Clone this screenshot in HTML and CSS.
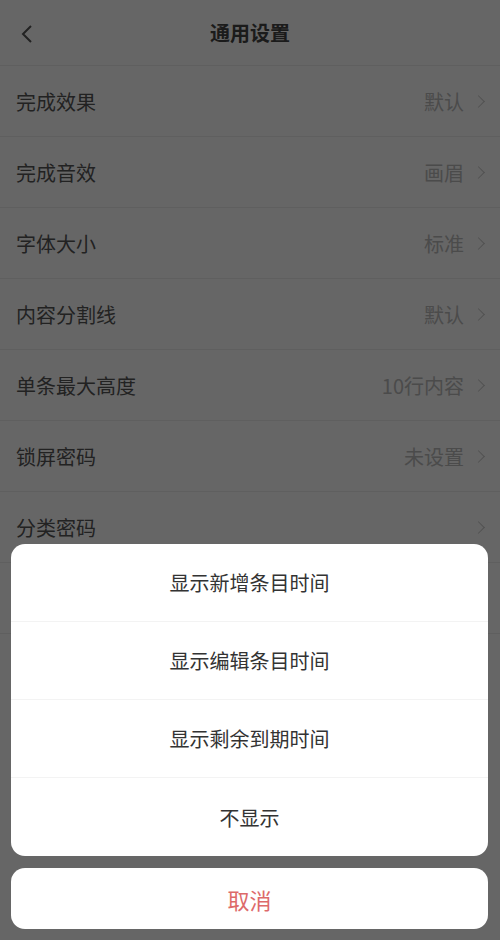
FILE: index.html
```html
<!DOCTYPE html>
<html lang="zh-CN">
<head>
  <meta charset="UTF-8" />
  <meta name="viewport" content="width=device-width, initial-scale=1.0"/>
  <title>通用设置</title>
  <link rel="stylesheet" href="styles.css">
</head>
<body>

  <div class="page">
    <div class="top-bar">
      <span class="back">
        <svg width="14" height="20" viewBox="0 0 14 20"><path d="M11 2 L3 10 L11 18" fill="none" stroke="#555" stroke-width="2"/></svg>
      </span>
      <h1 class="title">通用设置</h1>
    </div>

    <div class="list">
      <div class="row"><span class="label">完成效果</span><span class="value">默认</span><span class="arrow"></span></div>
      <div class="row"><span class="label">完成音效</span><span class="value">画眉</span><span class="arrow"></span></div>
      <div class="row"><span class="label">字体大小</span><span class="value">标准</span><span class="arrow"></span></div>
      <div class="row"><span class="label">内容分割线</span><span class="value">默认</span><span class="arrow"></span></div>
      <div class="row"><span class="label">单条最大高度</span><span class="value">10行内容</span><span class="arrow"></span></div>
      <div class="row"><span class="label">锁屏密码</span><span class="value">未设置</span><span class="arrow"></span></div>
      <div class="row"><span class="label">分类密码</span><span class="value"></span><span class="arrow"></span></div>
      <div class="row"><span class="label">显示时间</span><span class="value"></span><span class="arrow"></span></div>
    </div>
  </div>

  <!-- action sheet over the page -->
  <div class="mask"></div>
  <div class="sheet">
    <div class="sheet-card">
      <div class="sheet-item">显示新增条目时间</div>
      <div class="sheet-item">显示编辑条目时间</div>
      <div class="sheet-item">显示剩余到期时间</div>
      <div class="sheet-item">不显示</div>
    </div>
    <div class="sheet-card cancel">取消</div>
  </div>

</body>
</html>
```

FILE: styles.css
```css
body {
  margin: 0;
  font-family: "Noto Sans CJK SC", "Noto Sans", sans-serif;
  background-color: white;
  color: #555;
  height: 940px;
  overflow: hidden;
}

.page {
  background-color: white;
}

.top-bar {
  height: 65px;
  border-bottom: 1px solid #eee;
  display: flex;
  align-items: center;
  justify-content: center;
  position: relative;
}

.back {
  position: absolute;
  left: 20px;
  top: 24px;
  display: flex;
}

.title {
  margin: 0;
  font-size: 20px;
  font-weight: bold;
  color: #444;
}

.row {
  height: 70px;
  border-bottom: 1px solid #eee;
  display: flex;
  align-items: center;
  padding: 0 14px 0 16px;
}

.label {
  flex: 1;
  font-size: 20px;
  color: #555;
}

.value {
  font-size: 20px;
  color: #bbb;
}

.arrow {
  width: 8px;
  height: 8px;
  border-top: 1.5px solid #ccc;
  border-right: 1.5px solid #ccc;
  transform: rotate(45deg);
  margin-left: 10px;
  margin-right: 3px;
}

.mask {
  position: absolute;
  left: 0;
  top: 0;
  width: 100%;
  height: 940px;
  background-color: rgba(0, 0, 0, 0.6);
}

.sheet {
  position: absolute;
  left: 0;
  right: 0;
  bottom: 0;
  padding: 0 12px 11px 11px;
  display: flex;
  flex-direction: column;
  gap: 12px;
}

.sheet-card {
  background-color: white;
  border-radius: 14px;
  overflow: hidden;
}

.sheet-item {
  height: 77px;
  border-bottom: 1px solid #f3f3f3;
  display: flex;
  align-items: center;
  justify-content: center;
  font-size: 20px;
  color: #333;
}

.sheet-item:last-child {
  height: 78px;
  border-bottom: none;
}

.cancel {
  height: 61px;
  display: flex;
  align-items: center;
  justify-content: center;
  font-size: 22px;
  color: #dd6a6a;
}
```
